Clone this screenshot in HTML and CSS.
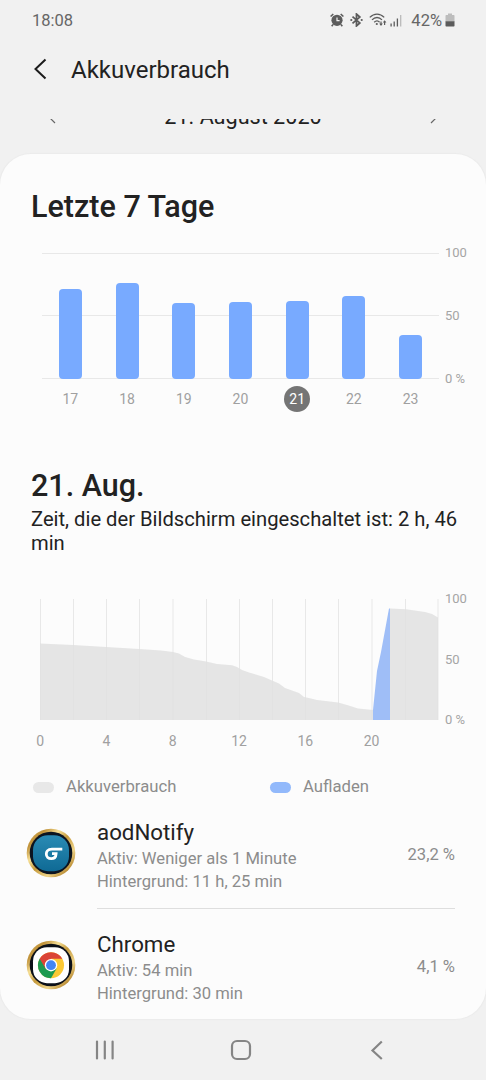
FILE: index.html
```html
<!DOCTYPE html>
<html lang="de">
<head>
  <meta charset="UTF-8">
  <title>Akkuverbrauch</title>
  <meta name="viewport" content="width=device-width, initial-scale=1.0">
  <link rel="stylesheet" href="styles.css">
</head>
<body>
  <div class="status-bar">
    <span class="clock">18:08</span>
    <div class="status-icons">
      <svg class="icon-alarm" width="14" height="14" viewBox="0 0 14 14">
        <circle cx="7" cy="7.3" r="5.6" fill="#5c5c5c"/>
        <path d="M7 4.4V7.6H9.6" fill="none" stroke="#f1f1f1" stroke-width="1.2"/>
        <path d="M.6 3.5 3.3 1M13.4 3.5 10.7 1M3 11.6 1.7 13.2M11 11.6l1.3 1.6" stroke="#5c5c5c" stroke-width="1.6"/>
      </svg>
      <svg class="icon-bluetooth" width="13" height="14" viewBox="0 0 13 14">
        <path d="M2.5 3.6 9.8 9.9 6.5 12.9V1.1L9.8 4.1 2.5 10.4" fill="none" stroke="#5c5c5c" stroke-width="1.8"/>
        <circle cx="1.3" cy="7" r="1.1" fill="#5c5c5c"/>
        <circle cx="11.7" cy="7" r="1.1" fill="#5c5c5c"/>
      </svg>
      <svg class="icon-wifi" width="18" height="14" viewBox="0 0 18 14">
        <path d="M.8 4.4C5-.1 11-.1 15.2 4.4M3 6.9C6 3.7 10 3.7 13 6.9M5.2 9.2C7 7.4 9 7.4 10.6 9.2" fill="none" stroke="#5c5c5c" stroke-width="1.3"/>
        <circle cx="7.8" cy="11" r="1.1" fill="#5c5c5c"/>
        <path d="M12 8.6V12M15.6 12V8.6" stroke="#5c5c5c" stroke-width="1.2"/>
        <path d="M10.2 10.6h3.6L12 13zM13.8 9.6h3.6L15.6 7.2z" fill="#5c5c5c"/>
      </svg>
      <svg class="icon-signal" width="12" height="13" viewBox="0 0 12 13">
        <path d="M1.1 9.5V12.5M4.2 7.5V12.5M7.4 4.5V12.5" stroke="#5c5c5c" stroke-width="1.3"/>
        <path d="M10.7 1V12.5" stroke="#b9b9b9" stroke-width="1.3"/>
      </svg>
      <span class="battery-text">42%</span>
      <svg class="icon-battery" width="10" height="14" viewBox="0 0 10 14">
        <path d="M.5 2.7Q.5 2 1.2 2H3V.6H7V2H8.8Q9.5 2 9.5 2.7V8.5H.5z" fill="#bdbdbd"/>
        <path d="M.5 8.3H9.5V12.8Q9.5 13.5 8.8 13.5H1.2Q.5 13.5 .5 12.8z" fill="#5c5c5c"/>
      </svg>
    </div>
  </div>

  <div class="header">
    <svg width="14" height="22" viewBox="0 0 14 22">
      <path d="M11.5 1.5 1.5 11 11.5 20.5" fill="none" stroke="#1c1c1c" stroke-width="2"/>
    </svg>
    <h1>Akkuverbrauch</h1>
  </div>

  <!-- date row is scrolled halfway under the header -->
  <div class="date-clip">
    <div class="date-row">
      <svg width="8" height="14" viewBox="0 0 8 14">
        <path d="M7 1 1 7 7 13" fill="none" stroke="#666" stroke-width="1.2"/>
      </svg>
      <span>21. August 2020</span>
      <svg width="8" height="14" viewBox="0 0 8 14">
        <path d="M1 1 7 7 1 13" fill="none" stroke="#666" stroke-width="1.2"/>
      </svg>
    </div>
  </div>

  <div class="card">
    <h2>Letzte 7 Tage</h2>

    <div class="week-chart">
      <div class="plot">
        <div class="bar" style="height: 90px"></div>
        <div class="bar" style="height: 96px"></div>
        <div class="bar" style="height: 76px"></div>
        <div class="bar" style="height: 77px"></div>
        <div class="bar" style="height: 78.5px"></div>
        <div class="bar" style="height: 83px"></div>
        <div class="bar" style="height: 44.5px"></div>
      </div>
      <div class="scale">
        <span>100</span>
        <span>50</span>
        <span>0 %</span>
      </div>
    </div>
    <div class="days">
      <span>17</span>
      <span>18</span>
      <span>19</span>
      <span>20</span>
      <span class="selected">21</span>
      <span>22</span>
      <span>23</span>
    </div>

    <h2 class="day-title">21. Aug.</h2>
    <p class="screen-time">Zeit, die der Bildschirm eingeschaltet ist: 2 h, 46 min</p>

    <div class="day-chart">
      <svg width="400" height="121" viewBox="0 0 400 121">
        <path d="M1.5 0V121M34.5 0V121M67.5 0V121M100.5 0V121M134 0V121M167.5 0V121M200.5 0V121M233.5 0V121M266.5 0V121M299.5 0V121M333 0V121M366.5 0V121M399 0V121" stroke="#000" stroke-opacity=".08"/>
        <g fill="#e1e1e1" fill-opacity=".85">
          <path d="M1 44.5 34 46 67 48 100 50 122 51.5 134 53 140 54.5 146 58 155 60.5 167 62.5 178 65 193 66.3 198 68 203 71 210 73.5 225 78 233 81.5 240 84.5 246 89 260 94 265 98 272 99.5 278 101 299 103.5 308 106 319 109.5 334 111V121H1z"/>
          <path d="M351 9.5 367 10.3 386 13 393 15 399 18.5V121H351z"/>
        </g>
        <path d="M334 121V111L338 72 342 53 350 9.5H351V121z" fill="#9fbef7"/>
      </svg>
      <div class="scale">
        <span>100</span>
        <span>50</span>
        <span>0 %</span>
      </div>
    </div>
    <div class="hours">
      <span>0</span>
      <span>4</span>
      <span>8</span>
      <span>12</span>
      <span>16</span>
      <span>20</span>
    </div>

    <div class="legend">
      <div class="legend-item"><span class="pill"></span>Akkuverbrauch</div>
      <div class="legend-item"><span class="pill charge"></span>Aufladen</div>
    </div>

    <div class="app">
      <svg width="50" height="50" viewBox="0 0 50 50">
        <defs>
          <linearGradient id="gold" x1="0" y1="0" x2="1" y2="1">
            <stop offset="0" stop-color="#d9b45a"/>
            <stop offset=".2" stop-color="#c0923a"/>
            <stop offset=".35" stop-color="#f6df96"/>
            <stop offset=".5" stop-color="#c59a3c"/>
            <stop offset=".7" stop-color="#f0d58a"/>
            <stop offset=".85" stop-color="#bd9038"/>
            <stop offset="1" stop-color="#f0d894"/>
          </linearGradient>
          <linearGradient id="teal" x1="0" y1="0" x2="0" y2="1">
            <stop offset="0" stop-color="#2a8bb4"/>
            <stop offset="1" stop-color="#0f6a95"/>
          </linearGradient>
        </defs>
        <circle cx="25" cy="25" r="24.3" fill="url(#gold)"/>
        <circle cx="25" cy="25" r="21.3" fill="#0c1420"/>
        <rect x="7" y="7.2" width="36" height="36" rx="15" fill="url(#teal)"/>
        <path d="M36.3 21.2H26C21.300 21.200 20.300 24.200 20.300 26C20.300 28.900 22.400 30.700 25.200 30.700C28.400 30.700 30 28.600 30.100 25.600H26" fill="none" stroke="#fff" stroke-width="2.8"/>
      </svg>
      <div class="app-info">
        <div class="app-name">aodNotify</div>
        <div>Aktiv: Weniger als 1 Minute</div>
        <div>Hintergrund: 11 h, 25 min</div>
      </div>
      <div class="percent">23,2 %</div>
    </div>

    <div class="divider"></div>

    <div class="app">
      <svg width="50" height="50" viewBox="0 0 50 50">
        <circle cx="25" cy="25" r="24.3" fill="url(#gold)"/>
        <circle cx="25" cy="25" r="21.3" fill="#0c1018"/>
        <rect x="7" y="7.2" width="36" height="36" rx="14" fill="#fff"/>
        <circle cx="25" cy="25.2" r="13" fill="#fcc934"/>
        <path d="M25 25.2 13.7 18.7A13 13 0 0 0 25 38.2L30.6 28.5z" fill="#1e9a50"/>
        <path d="M13.7 18.7A13 13 0 0 1 36.3 18.7H25V25.2L19.4 28.5z" fill="#db4437"/>
        <circle cx="25" cy="25.2" r="6.2" fill="#fff"/>
        <circle cx="25" cy="25.2" r="4.9" fill="#4285f4"/>
      </svg>
      <div class="app-info">
        <div class="app-name">Chrome</div>
        <div>Aktiv: 54 min</div>
        <div>Hintergrund: 30 min</div>
      </div>
      <div class="percent">4,1 %</div>
    </div>
  </div>

  <div class="nav-bar">
    <svg width="20" height="20" viewBox="0 0 20 20">
      <path d="M2 1.5V18.5M9.8 1.5V18.5M17.6 1.5V18.5" stroke="#858585" stroke-width="2.2" stroke-linecap="round"/>
    </svg>
    <svg class="home" width="22" height="22" viewBox="0 0 22 22">
      <rect x="2" y="2" width="18" height="18" rx="5" fill="none" stroke="#858585" stroke-width="2.2"/>
    </svg>
    <svg width="14" height="20" viewBox="0 0 14 20">
      <path d="M11.8 1.5 2.5 10.5 11.8 19" fill="none" stroke="#858585" stroke-width="2.2"/>
    </svg>
  </div>
</body>
</html>
```

FILE: styles.css
```css
body {
  margin: 0;
  width: 486px;
  height: 1080px;
  overflow: hidden;
  background-color: #f1f1f1;
  color: #222;
  font-family: Roboto, sans-serif;
}

svg {
  display: block;
  flex: none;
}

h1, h2, p {
  margin: 0;
}

.status-bar {
  display: flex;
  justify-content: space-between;
  align-items: center;
  height: 40px;
  padding: 0 31px 0 32px;
  box-sizing: border-box;
  font-size: 16.5px;
  color: #666;
}

.status-icons {
  display: flex;
  align-items: center;
}

.icon-bluetooth {
  margin-left: 6px;
}

.icon-wifi {
  margin-left: 6px;
}

.icon-signal {
  margin-left: 3px;
}

.battery-text {
  margin-left: 9px;
}

.icon-battery {
  margin-left: 3px;
}

.header {
  display: flex;
  align-items: center;
  gap: 23px;
  height: 58px;
  padding-left: 34px;
}

h1 {
  font-size: 24px;
  font-weight: 400;
  padding-top: 1px;
}

.date-clip {
  display: flex;
  align-items: flex-end;
  height: 16px;
  margin-top: 21px;
  overflow: hidden;
}

.date-row {
  display: flex;
  justify-content: space-between;
  align-items: center;
  width: 390px;
  margin: 0 auto;
  padding-bottom: 5px;
  font-size: 21.6px;
  line-height: 26px;
}

.card {
  height: 865px;
  margin-top: 19px;
  padding: 0 31px;
  box-sizing: border-box;
  border-radius: 31px;
  background-color: #fcfcfc;
  box-shadow: 0 0 1px 1px #ebebeb;
  overflow: hidden;
}

h2 {
  padding-top: 35px;
  font-size: 30.5px;
  font-weight: 500;
  line-height: 36px;
}

.week-chart {
  display: flex;
  height: 126px;
  margin: 28px 0 0 11px;
}

.plot {
  display: flex;
  flex: none;
  align-items: flex-end;
  justify-content: space-around;
  width: 397px;
  background: linear-gradient(#e8e8e8, #e8e8e8) 0 0 / 100% 1px no-repeat,
    linear-gradient(#e8e8e8, #e8e8e8) 0 62px / 100% 1px no-repeat,
    linear-gradient(#e8e8e8, #e8e8e8) 0 125px / 100% 1px no-repeat;
}

.bar {
  width: 23px;
  border-radius: 4px;
  background-color: #78aaff;
}

.scale {
  display: flex;
  flex-direction: column;
  justify-content: space-between;
  margin: -8px 0 -8px 6px;
  font-size: 13px;
  line-height: 16px;
  color: #a5a5a5;
  white-space: nowrap;
}

.days {
  display: flex;
  justify-content: space-around;
  width: 397px;
  margin: 7px 0 0 11px;
}

.days span {
  width: 26px;
  font-size: 14px;
  line-height: 26px;
  text-align: center;
  color: #a0a0a0;
}

.days .selected {
  border-radius: 50%;
  background-color: #757575;
  color: #fff;
}

.day-title {
  padding-top: 56px;
}

.screen-time {
  margin-top: 3px;
  margin-right: -5px;
  font-size: 20.2px;
  line-height: 24px;
}

.day-chart {
  display: flex;
  height: 121px;
  margin: 44px 0 0 8px;
}

.hours {
  display: flex;
  margin: 12px 0 0 -24px;
}

.hours span {
  width: 66.3px;
  font-size: 14px;
  line-height: 18px;
  text-align: center;
  color: #a0a0a0;
}

.legend {
  display: flex;
  margin: 26px 0 0 2px;
  font-size: 16.7px;
  line-height: 22px;
  color: #8c8c8c;
}

.legend-item {
  display: flex;
  flex: none;
  align-items: center;
  gap: 12px;
  width: 237px;
}

.legend-item:last-child {
  width: auto;
}

.pill {
  width: 21px;
  height: 11px;
  border-radius: 6px;
  background-color: #e8e8e8;
}

.pill.charge {
  background-color: #92b9fb;
}

.app {
  display: flex;
  align-items: center;
  height: 111px;
  margin-left: -5px;
}

.legend + .app {
  margin-top: -1px;
}

.app-info {
  flex: 1;
  margin-left: 21px;
  padding-top: 4px;
  font-size: 16.6px;
  line-height: 23px;
  color: #8c8c8c;
}

.app-name {
  font-size: 22.3px;
  line-height: 30px;
  color: #222;
}

.percent {
  padding-top: 3px;
  font-size: 16.6px;
  color: #8c8c8c;
}

.divider {
  height: 1px;
  margin-left: 66px;
  background-color: #dedede;
}

.nav-bar {
  display: flex;
  justify-content: space-between;
  align-items: center;
  height: 61px;
  padding: 0 102px 0 95px;
}

.home {
  margin-right: 4px;
}
```
